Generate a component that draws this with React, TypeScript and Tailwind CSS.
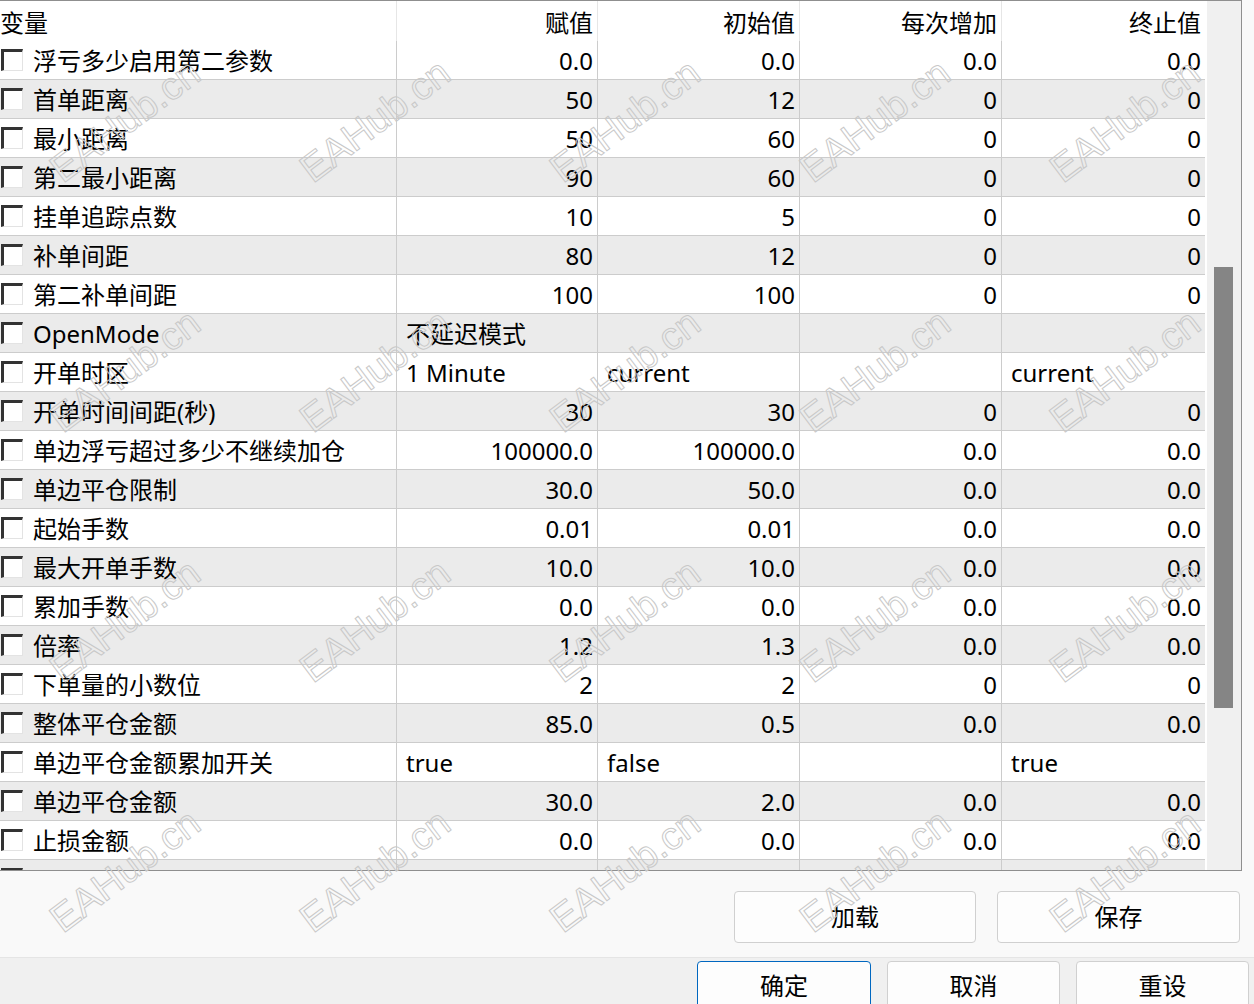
import React from 'react';

// 参数表数据：变量、赋值、初始值、每次增加、终止值；left = 文本左对齐
type Row = { name: string; vals: string[]; left?: boolean };

const rows: Row[] = [
  { name: '浮亏多少启用第二参数', vals: ['0.0', '0.0', '0.0', '0.0'] },
  { name: '首单距离', vals: ['50', '12', '0', '0'] },
  { name: '最小距离', vals: ['50', '60', '0', '0'] },
  { name: '第二最小距离', vals: ['90', '60', '0', '0'] },
  { name: '挂单追踪点数', vals: ['10', '5', '0', '0'] },
  { name: '补单间距', vals: ['80', '12', '0', '0'] },
  { name: '第二补单间距', vals: ['100', '100', '0', '0'] },
  { name: 'OpenMode', vals: ['不延迟模式', '', '', ''], left: true },
  { name: '开单时区', vals: ['1 Minute', 'current', '', 'current'], left: true },
  { name: '开单时间间距(秒)', vals: ['30', '30', '0', '0'] },
  { name: '单边浮亏超过多少不继续加仓', vals: ['100000.0', '100000.0', '0.0', '0.0'] },
  { name: '单边平仓限制', vals: ['30.0', '50.0', '0.0', '0.0'] },
  { name: '起始手数', vals: ['0.01', '0.01', '0.0', '0.0'] },
  { name: '最大开单手数', vals: ['10.0', '10.0', '0.0', '0.0'] },
  { name: '累加手数', vals: ['0.0', '0.0', '0.0', '0.0'] },
  { name: '倍率', vals: ['1.2', '1.3', '0.0', '0.0'] },
  { name: '下单量的小数位', vals: ['2', '2', '0', '0'] },
  { name: '整体平仓金额', vals: ['85.0', '0.5', '0.0', '0.0'] },
  { name: '单边平仓金额累加开关', vals: ['true', 'false', '', 'true'], left: true },
  { name: '单边平仓金额', vals: ['30.0', '2.0', '0.0', '0.0'] },
  { name: '止损金额', vals: ['0.0', '0.0', '0.0', '0.0'] },
  { name: '', vals: ['', '', '', ''] },
];

const headers = ['赋值', '初始值', '每次增加', '终止值'];

const cols = 'grid grid-cols-[397px_201px_202px_202px_203px]';

function Checkbox() {
  return (
    <div className="w-[22px] h-[22px] shrink-0 ml-[1px] bg-white border-t-[3px] border-l-[3px] border-t-[#333333] border-l-[#333333] border-b border-r border-b-[#e3e3e3] border-r-[#e3e3e3]" />
  );
}

function Watermarks() {
  const marks = Array.from({ length: 20 });
  return (
    <div className="pointer-events-none absolute left-0 top-[-5px] grid grid-cols-[repeat(5,250px)] auto-rows-[250px] place-items-center">
      {marks.map((_, i) => (
        <span
          key={i}
          className="rotate-[-37deg] text-[39px] leading-none text-transparent [-webkit-text-stroke:1px_#c8c8c8] font-['Liberation_Sans',sans-serif] whitespace-nowrap"
        >
          EAHub.cn
        </span>
      ))}
    </div>
  );
}

function Button({ label, primary, w }: { label: string; primary?: boolean; w: string }) {
  return (
    <div
      className={`${w} flex items-center justify-center rounded-[4px] bg-[#fdfdfd] border text-[24px] text-black ${
        primary ? 'border-[#0067c0]' : 'border-[#d0d0d0]'
      }`}
    >
      {label}
    </div>
  );
}

export default function App() {
  return (
    <div className="relative w-[1254px] h-[1004px] overflow-hidden bg-[#f9f9f9] text-black font-['Noto_Sans','Noto_Sans_CJK_SC',sans-serif]">
      {/* 参数表 */}
      <div className="flex h-[871px] w-[1242px] border-t border-b border-r border-[#8f8f8f]">
        <div className="w-[1205px] overflow-hidden bg-white">
          {/* 表头 */}
          <div className={`${cols} h-[40px] bg-white text-[24px]`}>
            <div className="flex items-center pt-[3px] border-r border-[#e6e6e6] leading-none">变量</div>
            {headers.map((h, i) => (
              <div
                key={h}
                className={`flex items-center justify-end pr-[4px] pt-[3px] leading-none ${i < 3 ? 'border-r border-[#e6e6e6]' : ''}`}
              >
                {h}
              </div>
            ))}
          </div>

          {rows.map((r, idx) => (
            <div
              key={idx}
              className={`${cols} h-[39px] border-b border-[#cccccc] text-[24px] ${idx % 2 ? 'bg-[#ebebeb]' : 'bg-white'}`}
            >
              <div className="flex items-center gap-[10px] border-r border-[#cccccc] leading-none">
                <Checkbox />
                <span className="pt-[2px]">{r.name}</span>
              </div>
              {r.vals.map((v, i) => (
                <div
                  key={i}
                  className={`flex items-center leading-none pt-[2px] ${
                    r.left ? 'justify-start pl-[9px]' : 'justify-end pr-[4px]'
                  } ${i < 3 ? 'border-r border-[#cccccc]' : ''}`}
                >
                  {v}
                </div>
              ))}
            </div>
          ))}
        </div>

        {/* 滚动条 */}
        <div className="w-[36px] bg-[#f0f0f0] border-l-2 border-white pl-[7px] pt-[266px]">
          <div className="w-[19px] h-[441px] bg-[#858585]" />
        </div>
      </div>

      {/* 加载 / 保存 */}
      <div className="flex h-[86px] justify-end gap-[21px] pr-[14px] pt-[20px]">
        <Button label="加载" w="w-[242px] h-[52px]" />
        <Button label="保存" w="w-[243px] h-[52px]" />
      </div>

      {/* 确定 / 取消 / 重设 */}
      <div className="flex h-[47px] justify-end gap-[16px] pr-[5px] pt-[3px] border-t border-[#e5e5e5] bg-[#f0f0f0]">
        <Button label="确定" primary w="w-[174px] h-[50px]" />
        <Button label="取消" w="w-[173px] h-[50px]" />
        <Button label="重设" w="w-[173px] h-[50px]" />
      </div>

      <Watermarks />
    </div>
  );
}
